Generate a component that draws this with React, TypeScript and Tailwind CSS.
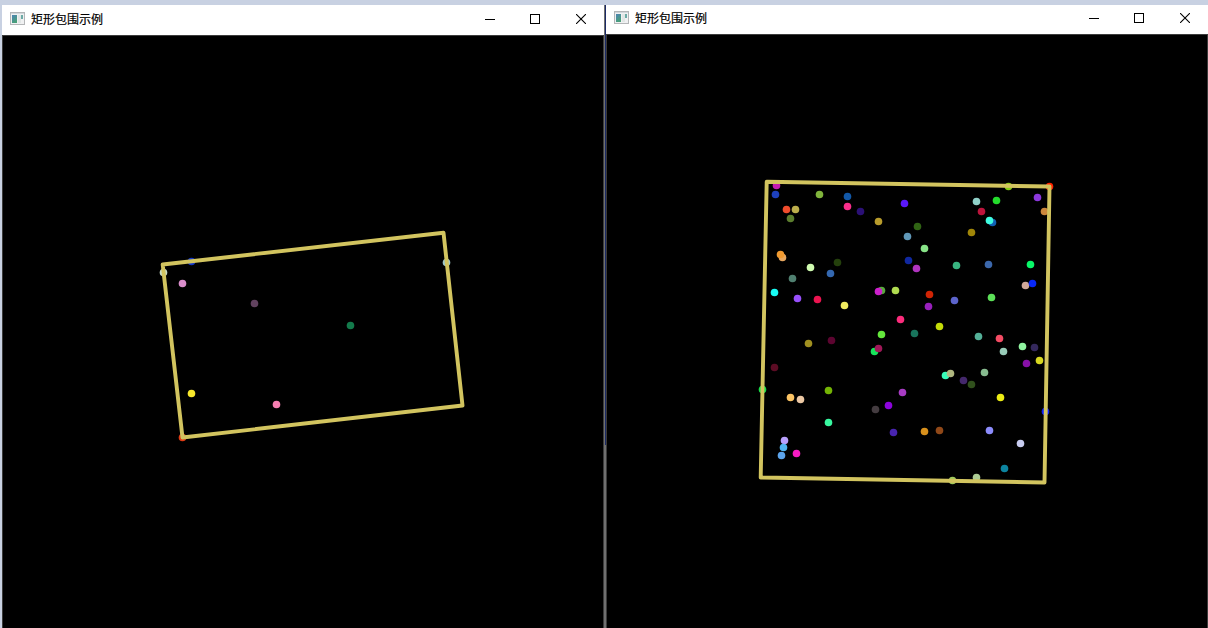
type Point = [x: number, y: number, color: string];

const leftPoints: Point[] = [
  [191.5, 261.5, '#1438c8'], [163.5, 272.5, '#c8dcc8'], [446.5, 262.5, '#a0c8c8'],
  [182.5, 283.5, '#da8dcb'], [254.5, 303.5, '#61425f'], [350.5, 325.5, '#137a4b'],
  [191.5, 393.5, '#f8e82c'], [276.5, 404.5, '#f57eb0'], [182.5, 437.5, '#e03c14'],
];

const rightPoints: Point[] = [
  [776.5, 185.5, '#c41bb0'], [775.5, 194.5, '#1d40bc'], [819.5, 194.5, '#80b43c'],
  [847.5, 196.5, '#1258a8'], [847.5, 206.5, '#fa2e8c'], [860.5, 211.5, '#2b1076'],
  [786.5, 209.5, '#f04c2c'], [795.5, 209.5, '#bcae4c'], [790.5, 218.5, '#5c7e2e'],
  [878.5, 221.5, '#b89c2c'], [904.5, 203.5, '#5a18fa'], [907.5, 236.5, '#6098b8'],
  [782.5, 257.5, '#e8a860'], [780.5, 254.5, '#f09a30'], [810.5, 267.5, '#d0fcb0'],
  [837.5, 262.5, '#24400c'], [830.5, 273.5, '#3468b0'], [792.5, 278.5, '#508070'],
  [908.5, 260.5, '#1028a0'], [976.5, 201.5, '#90d0c8'], [996.5, 200.5, '#24dc2c'],
  [981.5, 211.5, '#bc143c'], [992.5, 222.5, '#1060b4'], [989.5, 220.5, '#40fce0'],
  [1037.5, 197.5, '#8c38dc'], [1044.5, 211.5, '#cc883c'], [1008.5, 186.5, '#84cc14'],
  [1049.5, 186.5, '#ff2400'], [917.5, 226.5, '#306414'], [971.5, 232.5, '#a08608'],
  [924.5, 248.5, '#88e488'], [916.5, 268.5, '#b034c0'], [956.5, 265.5, '#38b480'],
  [988.5, 264.5, '#3c68ac'], [1030.5, 264.5, '#08f868'],
  [774.5, 292.5, '#18fcf4'], [797.5, 298.5, '#9850fc'], [817.5, 299.5, '#ec1450'],
  [844.5, 305.5, '#f0ec60'], [881.5, 290.5, '#58a83c'], [878.5, 291.5, '#cc20cc'],
  [895.5, 290.5, '#b0dc50'], [900.5, 319.5, '#fc2c7c'], [881.5, 334.5, '#64e83c'],
  [874.5, 351.5, '#18e45c'], [878.5, 348.5, '#a01858'], [831.5, 340.5, '#5c0430'],
  [808.5, 343.5, '#a09020'], [774.5, 367.5, '#5c0c24'], [929.5, 294.5, '#d02404'],
  [928.5, 306.5, '#9820bc'], [954.5, 300.5, '#5c64cc'], [991.5, 297.5, '#5ce058'],
  [1025.5, 285.5, '#d0a898'], [1032.5, 283.5, '#0828f8'], [939.5, 326.5, '#c4dc08'],
  [914.5, 333.5, '#18745c'], [978.5, 336.5, '#54b098'], [999.5, 338.5, '#f44c64'],
  [1003.5, 351.5, '#98ccb8'], [1022.5, 346.5, '#90f4a0'], [1034.5, 347.5, '#34285c'],
  [1039.5, 360.5, '#d8d820'], [1026.5, 363.5, '#8810a8'], [945.5, 375.5, '#38fcb8'],
  [950.5, 373.5, '#b0b880'], [984.5, 372.5, '#88bc90'], [963.5, 380.5, '#44286c'],
  [971.5, 384.5, '#30501c'], [762.5, 389.5, '#18e048'], [790.5, 397.5, '#fcc464'],
  [800.5, 399.5, '#ecc8a4'], [828.5, 390.5, '#74b404'], [828.5, 422.5, '#38f8a0'],
  [902.5, 392.5, '#a83cc4'], [888.5, 405.5, '#8c04dc'], [875.5, 409.5, '#443c40'],
  [893.5, 432.5, '#4824b0'], [784.5, 440.5, '#b8a0fc'], [783.5, 447.5, '#50b4f0'],
  [781.5, 455.5, '#5ca4ec'], [796.5, 453.5, '#f81cc4'], [924.5, 431.5, '#d8901c'],
  [939.5, 430.5, '#904818'], [1000.5, 397.5, '#ecec14'], [989.5, 430.5, '#8c8cfc'],
  [1020.5, 443.5, '#c8ccf0'], [1004.5, 468.5, '#0c84a0'], [1045.5, 411.5, '#0c20f8'],
  [952.5, 480.5, '#a0c85c'], [976.5, 477.5, '#accc94'],
];

function AppIcon() {
  return (
    <svg className="mb-[2px] h-[13px] w-[15px] shrink-0" viewBox="0 0 15 13">
      <defs>
        <linearGradient id="pane" x1="0" y1="0" x2="0.5" y2="1">
          <stop offset="0" stopColor="#4d83b4" />
          <stop offset="1" stopColor="#49a078" />
        </linearGradient>
      </defs>
      <rect x="0.5" y="0.5" width="14" height="12" fill="#f0f1f2" stroke="#b4b6b8" />
      <rect x="1" y="1" width="13" height="1" fill="#d2d7dc" />
      <rect x="2" y="3" width="5" height="8" fill="url(#pane)" />
      <rect x="8" y="3" width="3" height="8" fill="#e1e6e5" />
      <rect x="11" y="3" width="2" height="4" fill="#6caaa6" />
    </svg>
  );
}

function TitleBar({ className }: { className: string }) {
  return (
    <header className={`flex shrink-0 items-center bg-white text-black ${className}`}>
      <AppIcon />
      <h1 className="ml-[6px] grow whitespace-nowrap text-[12px] leading-[18px] [-webkit-text-stroke:0.2px_black]">
        矩形包围示例
      </h1>
      <div className="flex">
        <button aria-label="最小化" className="flex h-7 w-[45px] items-center justify-center">
          <svg className="size-[10px]" viewBox="0 0 10 10" shapeRendering="crispEdges">
            <path d="M0 5.5H10" stroke="#000" />
          </svg>
        </button>
        <button aria-label="最大化" className="flex h-7 w-[46px] items-center justify-center">
          <svg className="size-[10px]" viewBox="0 0 10 10" shapeRendering="crispEdges">
            <rect x="0.5" y="0.5" width="9" height="9" fill="none" stroke="#000" />
          </svg>
        </button>
        <button aria-label="关闭" className="flex h-7 w-[46px] items-center justify-center">
          <svg className="size-[10px]" viewBox="0 0 10 10">
            <path d="M0 0L10 10M10 0L0 10" stroke="#000" strokeWidth="1.1" />
          </svg>
        </button>
      </div>
    </header>
  );
}

function Plot({ points, outline, viewBox }: { points: Point[]; outline: string; viewBox: string }) {
  return (
    <svg className="block min-h-0 w-full flex-1 bg-black" viewBox={viewBox} preserveAspectRatio="xMinYMin slice">
      {points.map(([x, y, color], i) => (
        <circle key={i} cx={x} cy={y} r="3.8" fill={color} />
      ))}
      <polygon points={outline} fill="none" stroke="#d2c45f" strokeWidth="3.9" strokeLinejoin="round" />
    </svg>
  );
}

export default function App() {
  return (
    <main className="flex h-[628px] w-[1208px] overflow-hidden bg-[#c8d1e2] pt-[5px] font-['Noto_Sans_CJK_SC',sans-serif]">
      <section className="ml-[2px] flex w-[602px] flex-col">
        <TitleBar className="h-[30px] pb-[2px] pl-2" />
        <div className="flex min-h-0 flex-1 border-x border-t border-[#3c3c3c] bg-black">
          <Plot
            points={leftPoints}
            outline="162.7,264.5 443.5,232.7 462.5,405.5 182.5,437.5"
            viewBox="3 36 600 592"
          />
        </div>
      </section>
      <div className="w-px shrink-0 bg-[#707070]" />
      <div className="flex w-px shrink-0 flex-col bg-[#707070]">
        <div className="h-[440px] bg-[#1b2a66]" />
      </div>
      <section className="flex w-[602px] flex-col">
        <TitleBar className="h-[29px] pb-[3px] pl-2" />
        <div className="flex min-h-0 flex-1 border-x border-t border-[#3c3c3c] bg-black">
          <Plot
            points={rightPoints}
            outline="766.7,181.7 1049.5,186.5 1044.5,482.5 760.7,477.5"
            viewBox="607 35 600 593"
          />
        </div>
      </section>
    </main>
  );
}
